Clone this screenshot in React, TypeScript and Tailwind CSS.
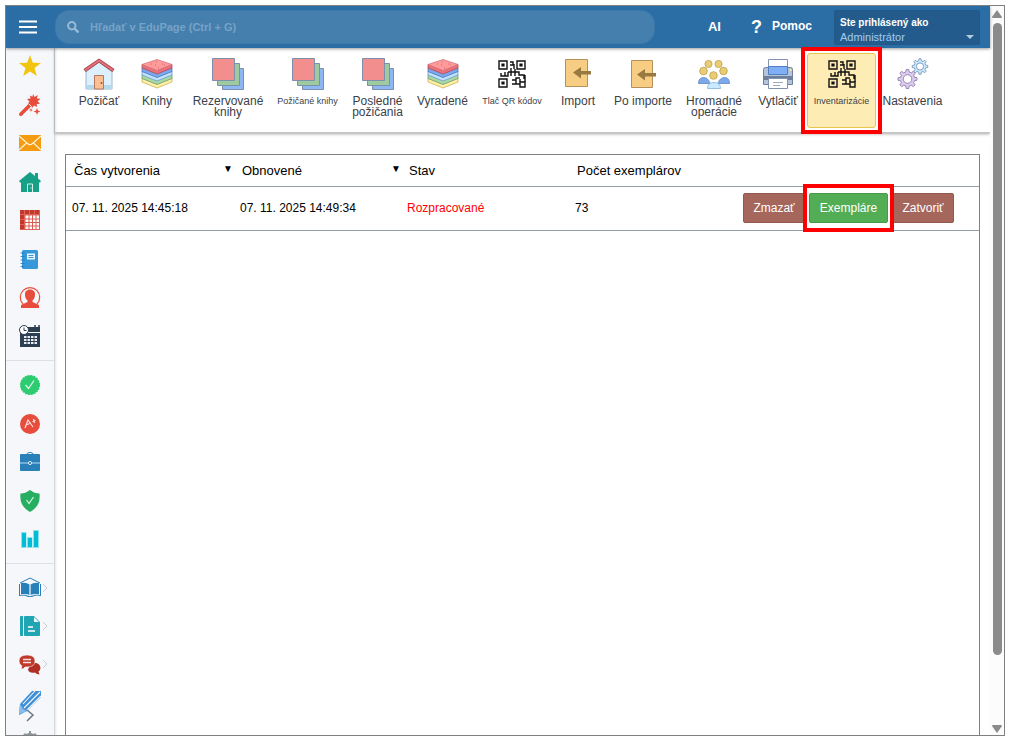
import type { ReactNode } from "react";

const House = () => (
  <svg viewBox="0 0 32 32" className="h-8 w-8">
    <path d="M3 14 16 4l13 10v17H3z" fill="#dcf1fd" stroke="#9db4cc" />
    <path d="M3 27h26v4H3z" fill="#b4d9ef" />
    <path d="M1.500 12.500 16 2.500l14.500 10" fill="none" stroke="#a9434e" strokeWidth="3.400" />
    <path d="M2 12.200 16 2.500l14 9.700" fill="none" stroke="#e8737b" strokeWidth="1.800" />
    <path d="M11.500 17.500h9V31h-9z" fill="#fcbf93" stroke="#b4795c" />
    <circle cx="18.500" cy="25" r="1" fill="#8b5a40" />
  </svg>
);

const Books = () => (
  <svg viewBox="0 0 32 32" className="h-8 w-8">
    <path d="M1 20v4l15 6 15-6v-4z" fill="#fff0a3" stroke="#c7b15e" strokeWidth=".8" />
    <path d="M1 17v3.500l15 6 15-6V17z" fill="#a9d8a3" stroke="#6d9c70" strokeWidth=".8" />
    <path d="M1 13v4l15 6 15-6v-4z" fill="#bfe2ff" stroke="#6d9cc8" strokeWidth=".8" />
    <path d="M1 10v3.500l15 6 15-6V10z" fill="#78a9f0" stroke="#5377b8" strokeWidth=".8" />
    <path d="M1 6.500V10l15 6 15-6V6.500z" fill="#e8707b" stroke="#b04d5a" strokeWidth=".8" />
    <path d="m1 6.500 15-5 15 5-15 6z" fill="#ff9b9b" stroke="#d8707a" strokeWidth=".8" />
    <path d="M10 6h1m4-2h1m1 6h1m3-4h1m-8 1h1m8 0h1" stroke="#cf6671" />
  </svg>
);

const Squares = () => (
  <svg viewBox="0 0 32 32" className="h-8 w-8" stroke="#7d8fad">
    <path d="M10.500 10.500h21v21h-21z" fill="#8db7f1" />
    <path d="M5.500 5.500h22v22h-22z" fill="#9dcb9f" />
    <path d="M.5.500h22v22H.5z" fill="#f28f8e" />
  </svg>
);

const QrCode = () => (
  <svg viewBox="0 0 28 28" className="h-7 w-7" fill="none" stroke="#111" strokeWidth="1.400">
    <path d="M1 1h8v8H1zM19 1h8v8h-8zM1 19h8v8H1zM22 22h5v5h-5z" />
    <path d="M4 4h2v2H4zM22 4h2v2h-2zM4 22h2v2H4z" fill="#111" strokeWidth="1.200" />
    <path d="M12 2h3v3h-3M16 4v5M13 8v6M10 12h11v3h5v4M10 12v4H3v-3M7 16v-4M13 12v4M17 9v7M22 19v3M14 24h4v-6h4M14 20h4M18 24h4M27 15v7" />
  </svg>
);

const ImportIcon = ({ late = false }: { late?: boolean }) => (
  <svg viewBox="0 0 32 32" className="h-8 w-8">
    <path d={late ? "M4.500 2.500h21v27h-21z" : "M3.500 1.500h22v27h-22z"} fill="#f6cd83" stroke="#b4915a" />
    <path d={late ? "M10 16.500l8-5.500v4h11v3.500H18v4z" : "M11 14.500 19 9v4h10v3.500H19v4z"} fill="#98793f" />
  </svg>
);

const People = () => (
  <svg viewBox="0 0 32 32" className="h-8 w-8">
    <g fill="#e8cd72" stroke="#c19d4b" strokeWidth=".8">
      <circle cx="10.500" cy="6" r="3.600" />
      <circle cx="20.500" cy="6" r="3.600" />
      <circle cx="5.500" cy="13" r="3.800" />
      <circle cx="25.500" cy="13" r="3.800" />
      <circle cx="15.500" cy="17.500" r="3.800" />
    </g>
    <path d="M.5 25.500c0-4 2-6 5-6s5.500 2 6.500 6zM31.500 25.500c0-4-2-6-5-6s-5.500 2-6.500 6z" fill="#7da9eb" stroke="#5d86c4" strokeWidth=".8" />
    <path d="M9.500 30.500c0-4 2.500-6 6.500-6s6.500 2 6.500 6z" fill="#c8ebff" stroke="#82b2dc" strokeWidth=".8" />
  </svg>
);

const Printer = () => (
  <svg viewBox="0 0 32 32" className="h-8 w-8">
    <path d="M6.500 1.500h19v10h-19z" fill="#fff" stroke="#8193ae" />
    <path d="M1.500 11.500q0-2 2-2h25q2 0 2 2v15h-29z" fill="#b4c4db" stroke="#6f819d" />
    <path d="M1.500 18h29v4h-29z" fill="#6e7f9b" />
    <path d="M6.500 8.500h19v8h-19z" fill="#7fb0f5" stroke="#527ec0" />
    <path d="M6.500 20.500h19v10h-19z" fill="#fff" stroke="#8193ae" />
    <path d="M11 24.500h10M11 27.500h7" stroke="#9caabf" />
    <circle cx="28.500" cy="12" r="1" fill="#ffe9a0" />
  </svg>
);

const gearPath = (teeth: number, outer: number, inner: number) => {
  const step = (Math.PI * 2) / teeth;
  const points: string[] = [];
  for (let i = 0; i < teeth; i += 1) {
    const a = i * step;
    [[-0.3, inner], [-0.17, outer], [0.17, outer], [0.3, inner]].forEach(([offset, radius]) => {
      const angle = a + offset * step;
      points.push(`${(Math.cos(angle) * radius).toFixed(2)} ${(Math.sin(angle) * radius).toFixed(2)}`);
    });
  }
  return `M${points.join("L")}Z`;
};

const Gears = () => (
  <svg viewBox="0 0 32 32" className="h-8 w-8">
    <g transform="translate(10.500 21)" stroke="#8e7eae" strokeWidth=".9">
      <path d={gearPath(8, 9.6, 7.2)} fill="#dccdf0" />
      <circle r="4.300" fill="#fff" />
    </g>
    <g transform="translate(23 8.500)" stroke="#7797b8" strokeWidth=".9">
      <path d={gearPath(8, 7.8, 5.8)} fill="#cdeaff" />
      <circle r="3.600" fill="#fff" />
    </g>
  </svg>
);

type Tool = { label: string; icon: ReactNode; width: string; small?: boolean; active?: boolean };

const tools: Tool[] = [
  { label: "Požičať", icon: <House />, width: "w-[58px]" },
  { label: "Knihy", icon: <Books />, width: "w-[58px]" },
  { label: "Rezervované knihy", icon: <Squares />, width: "w-[84px]" },
  { label: "Požičané knihy", icon: <Squares />, width: "w-[75px]", small: true },
  { label: "Posledné požičania", icon: <Squares />, width: "w-[65px]" },
  { label: "Vyradené", icon: <Books />, width: "w-[65px]" },
  { label: "Tlač QR kódov", icon: <QrCode />, width: "w-[74px]", small: true },
  { label: "Import", icon: <ImportIcon />, width: "w-[58px]" },
  { label: "Po importe", icon: <ImportIcon late />, width: "w-[72px]" },
  { label: "Hromadné operácie", icon: <People />, width: "w-[70px]" },
  { label: "Vytlačiť", icon: <Printer />, width: "w-[58px]" },
  { label: "Inventarizácie", icon: <QrCode />, width: "w-[69px]", small: true, active: true },
  { label: "Nastavenia", icon: <Gears />, width: "w-[73px]" },
];

const Glyph = ({ children }: { children: ReactNode }) => (
  <svg viewBox="0 0 22 22" className="h-[22px] w-[22px] overflow-visible">{children}</svg>
);

type NavItem = { name: string; icon: ReactNode; more?: boolean };

const mainNav: NavItem[] = [
  { name: "Obľúbené", icon: <Glyph><path d="m11 0 2.800 7.700 8.200.3-6.500 5 2.300 8-6.800-4.600L4.200 21l2.300-8L0 8l8.200-.3z" fill="#f1c40f" /></Glyph> },
  {
    name: "Sprievodca",
    icon: (
      <Glyph>
        <path d="M1.800 20.200 12 10" stroke="#e74c3c" strokeWidth="3.600" strokeLinecap="round" />
        <path d="m14 0 1.600 3 3-2-.6 3.500 3.500.2-2.800 2.600 2.300 2.400-3.300.3.300 3-3-1.600-2 2.600-1.200-3.400L8.500 10l2-2.500L8 5l3.500-.5L11 1.500l2.500 1.200z" fill="#e74c3c" />
        <path d="m9.500 9.500 3 3" stroke="#f5f7fa" />
        <path d="m18 14 .9 2.600 2.600.9-2.600.9L18 21l-.9-2.600-2.600-.9 2.600-.9zM12 14l.5 1.500 1.500.5-1.500.5L12 18l-.5-1.500L10 16l1.500-.5z" fill="#e74c3c" />
      </Glyph>
    ),
  },
  { name: "Správy", icon: <Glyph><path d="M0 3h22v16H0z" fill="#f39c12" /><path d="m0 4 8.500 7.500Q11 14 13.500 11.500L22 4M0 18l7.500-7M22 18l-7.500-7" stroke="#fff1d9" strokeWidth="1.100" fill="none" /></Glyph> },
  { name: "Domov", icon: <Glyph><path d="M11 1 16 5V2h3v5.500l3 2.500-1 1.500h-1V21H2v-9.500H1L0 10z" fill="#16a085" /><path d="M8.500 21v-8h5v8" stroke="#d9f0eb" strokeWidth="1" fill="none" /><path d="M11.500 17h1" stroke="#fff" /></Glyph> },
  {
    name: "Rozvrh",
    icon: (
      <Glyph>
        <path d="M1 1h20v20H1z" fill="#e06257" />
        <path d="M6.500 6.500H20V20H6.500z" fill="#fff" />
        <path d="M10 6v15M13.500 6v15M17 6v15M6 10h15M6 13.500h15M6 17h15" stroke="#dd5a50" />
        <path d="M1 1h4v4H1zM6 1h4v4H6zM11 1h4v4h-4zM16 1h4v4h-4zM1 6h4v4H1zM1 11h4v4H1zM1 16h4v4H1z" fill="#c0392b" />
      </Glyph>
    ),
  },
  { name: "Triedna kniha", icon: <Glyph><rect x="3" y="2" width="16" height="19" rx="1.500" fill="#3498db" /><path d="M1.500 5h4M1.500 8.500h4M1.500 12h4M1.500 15.500h4M1.500 18.500h4" stroke="#2577b5" strokeWidth=".8" /><path d="M8 5.500h8v6H8z" fill="#eaf6ff" /><path d="M9.500 7.500h5M9.500 9.500h5" stroke="#3498db" /></Glyph> },
  { name: "Žiaci", icon: <Glyph><path d="M4 18A9.700 9.700 0 1 1 18 18" fill="none" stroke="#e74c3c" strokeWidth="1.200" /><path d="M6 8c0-6 10-6 10 0 0 3-.5 5-2.500 6.500V16l6.500 3v3H2v-3l6.500-3v-1.500C6.500 13 6 11 6 8z" fill="#e74c3c" /></Glyph> },
  {
    name: "Kalendár",
    icon: (
      <Glyph>
        <path d="M1 2h20v20H1z" fill="#2c3e50" />
        <path d="M9 7.500h13" stroke="#f5f7fa" strokeWidth="1" />
        <path d="M16 0v4M20 0v4" stroke="#2c3e50" strokeWidth="1.500" />
        <path d="M5 11h13v8H5z" fill="#e8edf2" />
        <path d="M8 11v8M11.500 11v8M15 11v8M5 13.500h13M5 16.500h13" stroke="#2c3e50" />
        <circle cx="5" cy="5" r="4.500" fill="#fff" stroke="#2c3e50" />
        <path d="M5 2.500v3h2.500" stroke="#2c3e50" fill="none" />
      </Glyph>
    ),
  },
];

const schoolNav: NavItem[] = [
  { name: "Dochádzka", icon: <Glyph><circle cx="11" cy="11" r="9.500" fill="#2ecc71" stroke="#2ecc71" strokeWidth="1.200" strokeDasharray="2 1" /><path d="m6.500 11 3 3.500L15 6.500" stroke="#e5faed" strokeWidth="1.200" fill="none" /></Glyph> },
  { name: "Známky", icon: <Glyph><circle cx="11" cy="11" r="10" fill="#e74c3c" /><path d="m6 15 3-8 5 7M7 12l5-2M13.500 8.500l3-1M14.500 6l1 4" stroke="#ffe0dc" strokeWidth="1.200" fill="none" /></Glyph> },
  { name: "Agenda", icon: <Glyph><path d="M8 3q0-1.500 3-1.500T14 3" stroke="#2980b9" fill="none" /><rect x="1" y="3" width="20" height="17" rx="1" fill="#2980b9" /><path d="M1 12h20" stroke="#b8d8ee" /><circle cx="11" cy="12" r="1.600" fill="#2980b9" stroke="#d7eaf7" /></Glyph> },
  { name: "Bezpečnosť", icon: <Glyph><path d="M11 0q4.500 3.500 9.500 3.500Q22 16 11 22 0 16 1.500 3.500 6.500 3.500 11 0z" fill="#27ae60" /><path d="m7.500 10 2.500 3.500L14.500 7" stroke="#d9f5e4" strokeWidth="1.200" fill="none" /></Glyph> },
  { name: "Štatistiky", icon: <Glyph><path d="M2 4h5.500v16H2zM8 9h5.500v11H8zM14 2h6v18h-6z" fill="#8fe3ee" /><path d="M3 5h4v14H3zM9 10h4v9H9zM15 3h4v16h-4z" fill="#00bcd4" /></Glyph> },
];

const moreNav: NavItem[] = [
  { name: "Učivo", more: true, icon: <Glyph><path d="m1 6 10-5 10 5" stroke="#2980b9" fill="none" /><path d="M0 7h1v11q6-1 9 1h2q3-2 9-1V7h1v12q-6-1-9 1h-4q-3-2-9-1z" fill="#2980b9" /><path d="M2 6q5-1 8.500 1.500V18Q7 16.500 2 17.500zM20 6q-5-1-8.500 1.500V18q3.500-1.500 8.500-.5z" fill="#2980b9" /><path d="M11 8v10M2 18q5-1 8.500.8M20 18q-5-1-8.500.8" stroke="#cfe5f4" strokeWidth=".7" fill="none" /></Glyph> },
  { name: "Dokumenty", more: true, icon: <Glyph><path d="M2 1h2v20H2q-1 0-1-1V2q0-1 1-1zM6 1h9l6 6v13q0 1-1 1H6q-1 0-1-1V2q0-1 1-1z" fill="#20a5b5" /><path d="M15 2v5h5z" fill="#eafcff" /><path d="M9 12h5M9 16h7" stroke="#fff" strokeWidth="1.600" /></Glyph> },
  { name: "Komunikácia", more: true, icon: <Glyph><path d="M12 10q9-1 9.500 5 0 2-2 3.500l1 3q-3 0-4.500-2-6 1-7-3z" fill="#b03025" /><path d="M8 2q8 0 8 6t-8 6H6q-1 2-4 2l1-3q-3-2-3-5 0-6 8-6z" fill="#c0392b" stroke="#f5f7fa" strokeWidth=".6" /><path d="M4 6.500h8M4 9.500h8" stroke="#fbdfdb" strokeWidth="1.300" /></Glyph> },
];

const NavGroup = ({ items, className }: { items: NavItem[]; className: string }) => (
  <ul className={`flex shrink-0 flex-col items-center justify-between ${className}`}>
    {items.map((item) => (
      <li key={item.name} className="relative h-[22px]">
        <a href="#" aria-label={item.name} className="block">{item.icon}</a>
        {item.more && (
          <svg viewBox="0 0 6 10" className="absolute top-[6px] -right-[7px] h-[10px] w-[6px]" fill="none" stroke="#c9ced2">
            <path d="m1 1 4 4-4 4" />
          </svg>
        )}
      </li>
    ))}
  </ul>
);

const actionClass = "relative h-[30px] rounded-[2px] border px-[9px] text-xs text-white";

export default function App() {
  return (
    <div className="h-screen bg-white p-[5px] font-['Liberation_Sans',Arial,sans-serif]">
      <div className="flex h-full overflow-hidden border border-[#808080] bg-white">
        <div className="flex min-w-0 flex-1 flex-col">
          <header className="relative z-10 flex h-[42px] shrink-0 items-center bg-[#2b6ea5] shadow-[0_1px_3px_rgba(0,0,0,0.4)]">
            <button aria-label="Menu" className="flex w-[49px] shrink-0 justify-center pr-[5px]">
              <svg viewBox="0 0 18 14" className="h-[14px] w-[18px]" stroke="#fff" strokeWidth="1.800">
                <path d="M0 1.500h18M0 7h18M0 12.500h18" />
              </svg>
            </button>
            <label className="flex h-[34px] w-[600px] min-w-0 items-center rounded-[14px] border border-[#3d79ab] bg-[#447fae] pl-[11px]">
              <svg viewBox="0 0 12 12" className="h-3 w-3 shrink-0" fill="none" stroke="#9abbd4" strokeWidth="2">
                <circle cx="4.800" cy="4.800" r="3.700" />
                <path d="m7.500 7.500 4 4" strokeWidth="2.400" />
              </svg>
              <input type="text" aria-label="Hľadať" placeholder="Hľadať v EduPage (Ctrl + G)" className="ml-[11px] min-w-0 flex-1 bg-transparent text-[11px] font-bold text-white outline-none placeholder:text-[#78a3c6]" />
            </label>
            <div className="ml-auto flex shrink-0 items-center pr-[10px] text-white">
              <a href="#" className="text-[13px] font-bold">AI</a>
              <a href="#" className="ml-[30px] flex items-center">
                <span className="text-lg font-bold">?</span>
                <span className="ml-[10px] pb-[3px] text-xs font-bold">Pomoc</span>
              </a>
              <button className="ml-[22px] flex h-[35px] w-[146px] items-end justify-between rounded-[2px] border border-[#20598a] bg-[#235c8c] px-[5px] text-left">
                <span className="flex flex-col">
                  <span className="text-[10px] leading-[14px] font-bold">Ste prihlásený ako</span>
                  <span className="text-[11px] leading-[14px] text-[#a5cbee]">Administrátor</span>
                </span>
                <svg viewBox="0 0 8 4" className="mb-[5px] h-1 w-2"><path d="M0 0h8L4 4z" fill="#b3cde2" /></svg>
              </button>
            </div>
          </header>

          <div className="flex min-h-0 flex-1">
            <nav className="flex w-[49px] shrink-0 flex-col overflow-hidden border-r border-[#d5d8dc] bg-[#f5f7fa] shadow-[1px_0_2px_rgba(0,0,0,0.1)]">
              <NavGroup items={mainNav} className="h-[313px] border-b border-[#dcdfe3] pt-[7px] pb-[13px]" />
              <NavGroup items={schoolNav} className="h-[203px] border-b border-[#dcdfe3] pt-[13px] pb-[13px]" />
              <NavGroup items={moreNav} className="h-[111px] pt-[13px]" />
              <a href="#" aria-label="Nástroje" className="mt-[15px] flex shrink-0 justify-center">
                <svg viewBox="0 0 24 32" className="h-8 w-6">
                  <path d="M2 14 14 1h9v6L9 21l-8 4z" fill="#3f8fd6" />
                  <path d="M5 14 17 1M6 18 22 2M9 20 23 6" stroke="#f5f7fa" strokeWidth="1.100" />
                  <path d="m2 14-1 10 8-3-4-2z" fill="#8cbde9" />
                  <path d="m9 20 6 5-6 6" fill="none" stroke="#6b7684" strokeWidth="1.500" />
                </svg>
              </a>
              <a href="#" aria-label="Nastavenia systému" className="mt-[9px] flex shrink-0 justify-center">
                <svg viewBox="0 0 16 16" className="h-4 w-4"><path d="M7 0h2v2l3 1 1-1 2 2-1 2 2 1v3H0V7l2-1-1-2 2-2 1 1 3-1z" fill="#8b959b" /></svg>
              </a>
            </nav>

            <main className="flex min-w-0 flex-1 flex-col">
              <div className="flex h-[85px] shrink-0 items-start border-b border-[#c4c4c4] pt-[5px] pl-[15px] shadow-[0_1px_3px_rgba(0,0,0,0.35)]">
                {tools.map((tool) => (
                  <button
                    key={tool.label}
                    className={`relative flex h-[75px] shrink-0 flex-col items-center rounded-[3px] border text-[#3b4148] ${tool.width} ${tool.active ? "border-[#e8c54d] bg-[#fdedb5]" : "border-transparent"}`}
                  >
                    <span className="mt-[4px] flex h-8 items-center justify-center">{tool.icon}</span>
                    <span className={`mt-[6px] block px-[2px] text-center leading-[11px] ${tool.small ? "text-[9px] whitespace-nowrap" : "text-xs"}`}>{tool.label}</span>
                    {tool.active && <span className="pointer-events-none absolute -inset-x-[7px] -inset-y-[7px] z-20 border-4 border-[#ff0000]" />}
                  </button>
                ))}
              </div>

              <section className="mt-[21px] mr-[10px] ml-[10px] min-h-0 flex-1 border border-b-0 border-[#808080]">
                <table className="w-full table-fixed border-collapse text-left text-xs text-black">
                  <colgroup>
                    <col className="w-[167px]" />
                    <col className="w-[168px]" />
                    <col className="w-[167px]" />
                    <col className="w-[140px]" />
                    <col />
                  </colgroup>
                  <thead>
                    <tr className="h-[31px] border-b border-[#929ea8] text-[13px]">
                      <th className="pl-2 font-normal"><span className="flex justify-between">Čas vytvorenia<span className="text-[10px]">▼</span></span></th>
                      <th className="pl-[9px] font-normal"><span className="flex justify-between">Obnovené<span className="text-[10px]">▼</span></span></th>
                      <th className="pl-2 font-normal">Stav</th>
                      <th className="pl-[9px] font-normal">Počet exemplárov</th>
                      <th aria-label="Akcie" />
                    </tr>
                  </thead>
                  <tbody>
                    <tr className="h-11 border-b border-[#929ea8]">
                      <td className="pl-[6px]">07. 11. 2025 14:45:18</td>
                      <td className="pl-[7px]">07. 11. 2025 14:49:34</td>
                      <td className="pl-[6px] text-[#ff0000]">Rozpracované</td>
                      <td className="pl-[7px]">73</td>
                      <td className="pr-[25px]">
                        <div className="flex justify-end gap-1">
                          <button className={`${actionClass} w-[62px] border-[#94584e] bg-[#a5675c]`}>Zmazať</button>
                          <button className={`${actionClass} z-10 w-[79px] border-[#469a49] bg-[#53ad55]`}>
                            Exempláre
                            <span className="pointer-events-none absolute -inset-x-[7px] -inset-y-[10px] border-4 border-[#ff0000]" />
                          </button>
                          <button className={`${actionClass} w-[62px] border-[#94584e] bg-[#a5675c]`}>Zatvoriť</button>
                        </div>
                      </td>
                    </tr>
                  </tbody>
                </table>
              </section>
            </main>
          </div>
        </div>

        <div aria-hidden="true" className="flex w-[14px] shrink-0 flex-col items-center bg-[#fcfcfc] pt-1 pb-[2px]">
          <svg viewBox="0 0 10 8" className="h-2 w-[10px]"><path d="M5 0 0 7q0 1 1 1h8q1 0 1-1z" fill="#8b8b8b" /></svg>
          <div className="mt-[5px] flex w-[9px] flex-1 flex-col">
            <div className="h-[90%] rounded-full bg-[#8b8b8b]" />
          </div>
          <svg viewBox="0 0 10 8" className="h-2 w-[10px]"><path d="M5 8 0 1q0-1 1-1h8q1 0 1 1z" fill="#8b8b8b" /></svg>
        </div>
      </div>
    </div>
  );
}
